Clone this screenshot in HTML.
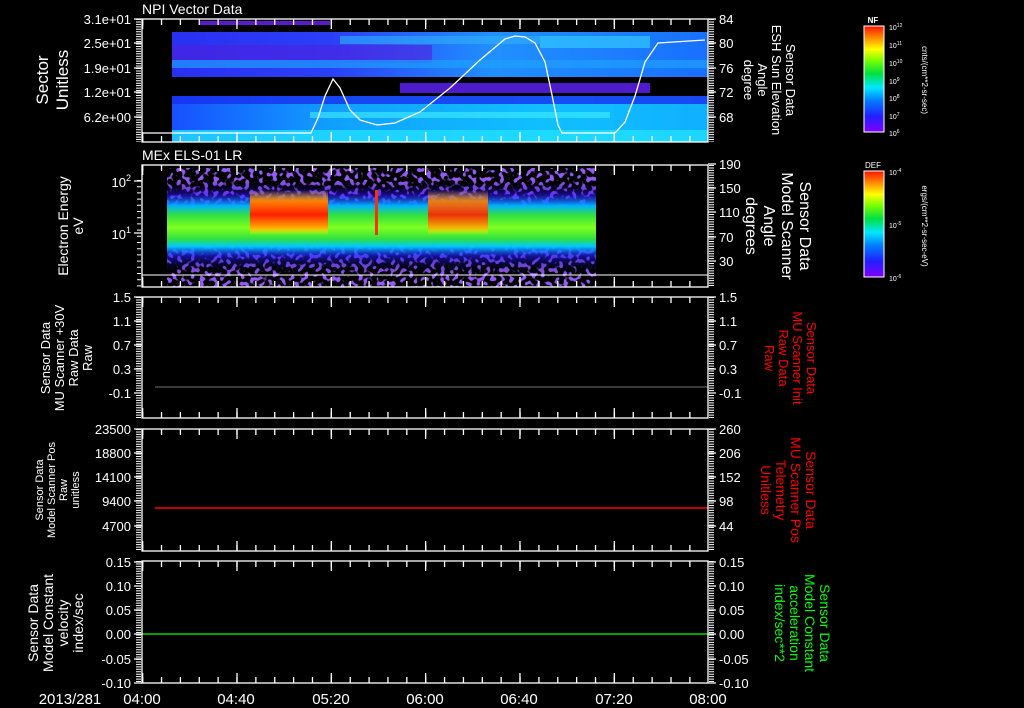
<!DOCTYPE html>
<html><head><meta charset="utf-8"><style>
html,body{margin:0;padding:0;background:#000;width:1024px;height:708px;overflow:hidden}
svg{display:block}
text{font-family:"Liberation Sans",sans-serif;fill:#fff}
</style></head><body>
<svg width="1024" height="708" viewBox="0 0 1024 708" xmlns="http://www.w3.org/2000/svg">
<defs>
<linearGradient id="cb" x1="0" y1="1" x2="0" y2="0">
<stop offset="0" stop-color="#8000ff"/><stop offset="0.15" stop-color="#2020ff"/><stop offset="0.3" stop-color="#0080ff"/><stop offset="0.42" stop-color="#00e8ff"/><stop offset="0.55" stop-color="#00e040"/><stop offset="0.68" stop-color="#80ff00"/><stop offset="0.78" stop-color="#ffff00"/><stop offset="0.9" stop-color="#ff8000"/><stop offset="1" stop-color="#ff1000"/>
</linearGradient>
<linearGradient id="els" x1="0" y1="0" x2="0" y2="1">
<stop offset="0" stop-color="#000" stop-opacity="0"/><stop offset="0.15" stop-color="#3010ff" stop-opacity="0.5"/><stop offset="0.27" stop-color="#00b0ff"/><stop offset="0.37" stop-color="#30e040"/><stop offset="0.5" stop-color="#80ff20"/><stop offset="0.62" stop-color="#30e040"/><stop offset="0.7" stop-color="#00c8ff"/><stop offset="0.8" stop-color="#2020ff" stop-opacity="0.6"/><stop offset="1" stop-color="#000" stop-opacity="0"/>
</linearGradient>
<linearGradient id="hot" x1="0" y1="0" x2="0" y2="1">
<stop offset="0" stop-color="#ffd000" stop-opacity="0"/><stop offset="0.25" stop-color="#ff8000"/><stop offset="0.55" stop-color="#ff2000"/><stop offset="0.85" stop-color="#ffb000"/><stop offset="1" stop-color="#ffff00" stop-opacity="0"/>
</linearGradient>
<filter id="spk" x="0" y="0" width="100%" height="100%">
<feTurbulence type="fractalNoise" baseFrequency="0.22" numOctaves="1" seed="5" result="n"/>
<feColorMatrix in="n" type="matrix" values="0 0 0 0 0.3  0 0 0 0 0.1  0 0 0 0 0.95  0 0 0 12 -6.3"/>
</filter>
<linearGradient id="b1" x1="0" y1="0" x2="1" y2="0">
<stop offset="0" stop-color="#2a30f0"/><stop offset="0.3" stop-color="#2a40f8"/><stop offset="0.6" stop-color="#2090ff"/><stop offset="1" stop-color="#1870ff"/>
</linearGradient>
<linearGradient id="b2" x1="0" y1="0" x2="1" y2="0">
<stop offset="0" stop-color="#1850ff"/><stop offset="0.3" stop-color="#10a0ff"/><stop offset="0.7" stop-color="#10c0ff"/><stop offset="1" stop-color="#10b0ff"/>
</linearGradient>
</defs>

<rect x="172" y="32" width="536" height="45" fill="url(#b1)"/>
<rect x="172" y="45" width="260" height="18" fill="#5020e0" opacity="0.6"/>
<rect x="340" y="36" width="200" height="8" fill="#30b0ff" opacity="0.6"/>
<rect x="540" y="36" width="110" height="12" fill="#30c8ff" opacity="0.7"/>
<rect x="172" y="60" width="536" height="8" fill="#1ea0ff" opacity="0.7"/>
<rect x="172" y="96" width="536" height="46" fill="url(#b2)"/>
<rect x="172" y="96" width="536" height="8" fill="#1830f0" opacity="0.8"/>
<rect x="310" y="112" width="300" height="6" fill="#40f0ff" opacity="0.6"/>
<rect x="172" y="130" width="536" height="12" fill="#20e0ff" opacity="0.8"/>
<rect x="200" y="21" width="130" height="4" fill="#7020ff" opacity="0.8"/>
<rect x="400" y="83" width="250" height="10" fill="#6020ff" opacity="0.8"/>
<polyline fill="none" stroke="#fff" stroke-width="1.3" points="142,133 311,133 318,118 325,96 333,79 340,88 350,110 360,120 377,125 395,123 420,112 450,88 480,60 505,39 515,36 525,37 535,43 545,62 552,95 558,125 562,133 615,133 625,122 635,96 645,62 658,43 705,40"/>

<rect x="167" y="168" width="429" height="119" fill="#000"/>
<rect x="167" y="168" width="429" height="119" filter="url(#spk)"/>
<rect x="167" y="180" width="429" height="95" fill="url(#els)"/>
<rect x="250" y="190" width="78" height="45" fill="url(#hot)"/>
<rect x="428" y="190" width="60" height="45" fill="url(#hot)" opacity="0.9"/>
<rect x="375" y="190" width="3" height="45" fill="#ff3000"/>
<line x1="142" y1="275" x2="708" y2="275" stroke="#fff" stroke-width="1"/>

<line x1="155" y1="387" x2="708" y2="387" stroke="#707070" stroke-width="1"/>
<line x1="155" y1="508" x2="708" y2="508" stroke="#ff0000" stroke-width="1.5"/>
<line x1="142" y1="634" x2="708" y2="634" stroke="#00ff00" stroke-width="1.3"/>

<g stroke="#fff" fill="none" stroke-width="1.3">
<rect x="142" y="19" width="566" height="123"/>
<rect x="142" y="165" width="566" height="122"/>
<rect x="142" y="297" width="566" height="121"/>
<rect x="142" y="429" width="566" height="122"/>
<rect x="142" y="561" width="566" height="122"/>
</g>
<g stroke="#fff" stroke-width="6" stroke-dasharray="1.3 17.57" fill="none">
<line x1="142" y1="22" x2="708" y2="22"/><line x1="142" y1="139" x2="708" y2="139"/>
<line x1="142" y1="168" x2="708" y2="168"/><line x1="142" y1="284" x2="708" y2="284"/>
<line x1="142" y1="300" x2="708" y2="300"/><line x1="142" y1="415" x2="708" y2="415"/>
<line x1="142" y1="432" x2="708" y2="432"/><line x1="142" y1="548" x2="708" y2="548"/>
<line x1="142" y1="564" x2="708" y2="564"/><line x1="142" y1="680" x2="708" y2="680"/>
</g>
<g stroke="#fff" stroke-width="10" stroke-dasharray="1.3 93.03" fill="none">
<line x1="142" y1="24" x2="708" y2="24"/><line x1="142" y1="137" x2="708" y2="137"/>
<line x1="142" y1="170" x2="708" y2="170"/><line x1="142" y1="282" x2="708" y2="282"/>
<line x1="142" y1="302" x2="708" y2="302"/><line x1="142" y1="413" x2="708" y2="413"/>
<line x1="142" y1="434" x2="708" y2="434"/><line x1="142" y1="546" x2="708" y2="546"/>
<line x1="142" y1="566" x2="708" y2="566"/><line x1="142" y1="678" x2="708" y2="678"/>
</g>
<g stroke="#fff" stroke-width="5" stroke-dasharray="1 1.45" fill="none">
<line x1="138.5" y1="19" x2="138.5" y2="142"/><line x1="711.5" y1="19" x2="711.5" y2="142"/>
<line x1="711.5" y1="165" x2="711.5" y2="287"/>
<line x1="138.5" y1="297" x2="138.5" y2="418"/><line x1="711.5" y1="297" x2="711.5" y2="418"/>
<line x1="138.5" y1="429" x2="138.5" y2="551"/><line x1="711.5" y1="429" x2="711.5" y2="551"/>
<line x1="138.5" y1="561" x2="138.5" y2="683"/><line x1="711.5" y1="561" x2="711.5" y2="683"/>
</g>
<g stroke="#fff" stroke-width="4" stroke-dasharray="1 5.2" fill="none">
<line x1="139" y1="180" x2="139" y2="287"/>
</g>
<g stroke="#fff" stroke-width="1.3">
<path d="M134 19H142M134 43H142M134 68H142M134 92H142M134 117H142 M708 19H716M708 43H716M708 68H716M708 92H716M708 117H716"/>
<path d="M134 181H142M134 233H142 M708 164H716M708 188H716M708 212H716M708 237H716M708 261H716"/>
<path d="M134 297H142M134 321H142M134 345H142M134 369H142M134 393H142 M708 297H716M708 321H716M708 345H716M708 369H716M708 393H716"/>
<path d="M134 429H142M134 453H142M134 477H142M134 501H142M134 526H142 M708 429H716M708 453H716M708 477H716M708 501H716M708 526H716"/>
<path d="M134 562H142M134 586H142M134 610H142M134 634H142M134 659H142M134 683H142 M708 562H716M708 586H716M708 610H716M708 634H716M708 659H716M708 683H716"/>
</g>

<text x="142" y="14" font-size="14">NPI Vector Data</text>
<text x="142" y="160" font-size="14">MEx ELS-01 LR</text>

<g font-size="13" text-anchor="end">
<text x="131" y="24">3.1e+01</text><text x="131" y="48">2.5e+01</text><text x="131" y="73">1.9e+01</text><text x="131" y="97">1.2e+01</text><text x="131" y="122">6.2e+00</text>
<text x="131" y="187">10<tspan font-size="9" dy="-6">2</tspan></text><text x="131" y="239">10<tspan font-size="9" dy="-6">1</tspan></text>
<text x="131" y="302">1.5</text><text x="131" y="326">1.1</text><text x="131" y="350">0.7</text><text x="131" y="374">0.3</text><text x="131" y="398">-0.1</text>
<text x="131" y="434">23500</text><text x="131" y="458">18800</text><text x="131" y="482">14100</text><text x="131" y="506">9400</text><text x="131" y="531">4700</text>
<text x="131" y="567">0.15</text><text x="131" y="591">0.10</text><text x="131" y="615">0.05</text><text x="131" y="639">0.00</text><text x="131" y="664">-0.05</text><text x="131" y="688">-0.10</text>
</g>
<g font-size="13">
<text x="719" y="24">84</text><text x="719" y="48">80</text><text x="719" y="73">76</text><text x="719" y="97">72</text><text x="719" y="122">68</text>
<text x="719" y="169">190</text><text x="719" y="193">150</text><text x="719" y="217">110</text><text x="719" y="242">70</text><text x="719" y="266">30</text>
<text x="719" y="302">1.5</text><text x="719" y="326">1.1</text><text x="719" y="350">0.7</text><text x="719" y="374">0.3</text><text x="719" y="398">-0.1</text>
<text x="719" y="434">260</text><text x="719" y="458">206</text><text x="719" y="482">152</text><text x="719" y="506">98</text><text x="719" y="531">44</text>
<text x="719" y="567">0.15</text><text x="719" y="591">0.10</text><text x="719" y="615">0.05</text><text x="719" y="639">0.00</text><text x="719" y="664">-0.05</text><text x="719" y="688">-0.10</text>
</g>
<g font-size="15" text-anchor="middle">
<text x="70" y="704">2013/281</text>
<text x="142" y="704">04:00</text><text x="236" y="704">04:40</text><text x="331" y="704">05:20</text><text x="425" y="704">06:00</text><text x="519" y="704">06:40</text><text x="614" y="704">07:20</text><text x="708" y="704">08:00</text>
</g>

<g text-anchor="middle">
<text transform="translate(48,80) rotate(-90)" font-size="17"><tspan x="0" dy="0">Sector</tspan><tspan x="0" dy="20">Unitless</tspan></text>
<text transform="translate(68,226) rotate(-90)" font-size="14"><tspan x="0">Electron Energy</tspan><tspan x="0" dy="15">eV</tspan></text>
<text transform="translate(50,358) rotate(-90)" font-size="13"><tspan x="0">Sensor Data</tspan><tspan x="0" dy="14">MU Scanner +30V</tspan><tspan x="0" dy="14">Raw Data</tspan><tspan x="0" dy="14">Raw</tspan></text>
<text transform="translate(43,490) rotate(-90)" font-size="11"><tspan x="0">Sensor Data</tspan><tspan x="0" dy="12">Model Scanner Pos</tspan><tspan x="0" dy="12">Raw</tspan><tspan x="0" dy="12">unitless</tspan></text>
<text transform="translate(38,623) rotate(-90)" font-size="14"><tspan x="0">Sensor Data</tspan><tspan x="0" dy="15">Model Constant</tspan><tspan x="0" dy="15">velocity</tspan><tspan x="0" dy="15">index/sec</tspan></text>
</g>
<g text-anchor="middle">
<text transform="translate(786,80) rotate(90)" font-size="13"><tspan x="0">Sensor Data</tspan><tspan x="0" dy="14">ESH Sun Elevation</tspan><tspan x="0" dy="14">Angle</tspan><tspan x="0" dy="14">degree</tspan></text>
<text transform="translate(800,226) rotate(90)" font-size="16"><tspan x="0">Sensor Data</tspan><tspan x="0" dy="18">Model Scanner</tspan><tspan x="0" dy="18">Angle</tspan><tspan x="0" dy="18">degrees</tspan></text>
<text transform="translate(807,358) rotate(90)" font-size="13" style="fill:#ff0000"><tspan x="0">Sensor Data</tspan><tspan x="0" dy="14">MU Scanner Init</tspan><tspan x="0" dy="14">Raw Data</tspan><tspan x="0" dy="14">Raw</tspan></text>
<text transform="translate(806,490) rotate(90)" font-size="14" style="fill:#ff0000"><tspan x="0">Sensor Data</tspan><tspan x="0" dy="15">MU Scanner Pos</tspan><tspan x="0" dy="15">Telemetry</tspan><tspan x="0" dy="15">Unitless</tspan></text>
<text transform="translate(820,623) rotate(90)" font-size="14" style="fill:#00ff00"><tspan x="0">Sensor Data</tspan><tspan x="0" dy="15">Model Constant</tspan><tspan x="0" dy="15">acceleration</tspan><tspan x="0" dy="15">index/sec**2</tspan></text>
</g>

<rect x="864" y="26" width="20" height="106" fill="url(#cb)" stroke="#fff" stroke-width="1"/>
<rect x="864" y="171" width="20" height="106" fill="url(#cb)" stroke="#fff" stroke-width="1"/>
<text x="873" y="23" font-size="8" text-anchor="middle" font-weight="bold">NF</text>
<text x="873" y="168" font-size="8" text-anchor="middle">DEF</text>
<g font-size="7">
<text x="889" y="30">10<tspan font-size="5" dy="-3">12</tspan></text>
<text x="889" y="48">10<tspan font-size="5" dy="-3">11</tspan></text>
<text x="889" y="66">10<tspan font-size="5" dy="-3">10</tspan></text>
<text x="889" y="84">10<tspan font-size="5" dy="-3">9</tspan></text>
<text x="889" y="101">10<tspan font-size="5" dy="-3">8</tspan></text>
<text x="889" y="119">10<tspan font-size="5" dy="-3">7</tspan></text>
<text x="889" y="136">10<tspan font-size="5" dy="-3">6</tspan></text>
<text x="889" y="175">10<tspan font-size="5" dy="-3">-4</tspan></text>
<text x="889" y="228">10<tspan font-size="5" dy="-3">-5</tspan></text>
<text x="889" y="281">10<tspan font-size="5" dy="-3">-6</tspan></text>
</g>
<text transform="translate(922,80) rotate(90)" font-size="8" text-anchor="middle">cnts/(cm**2-sr-sec)</text>
<text transform="translate(922,226) rotate(90)" font-size="8" text-anchor="middle">ergs/(cm**2-sr-sec-eV)</text>
</svg>
</body></html>
